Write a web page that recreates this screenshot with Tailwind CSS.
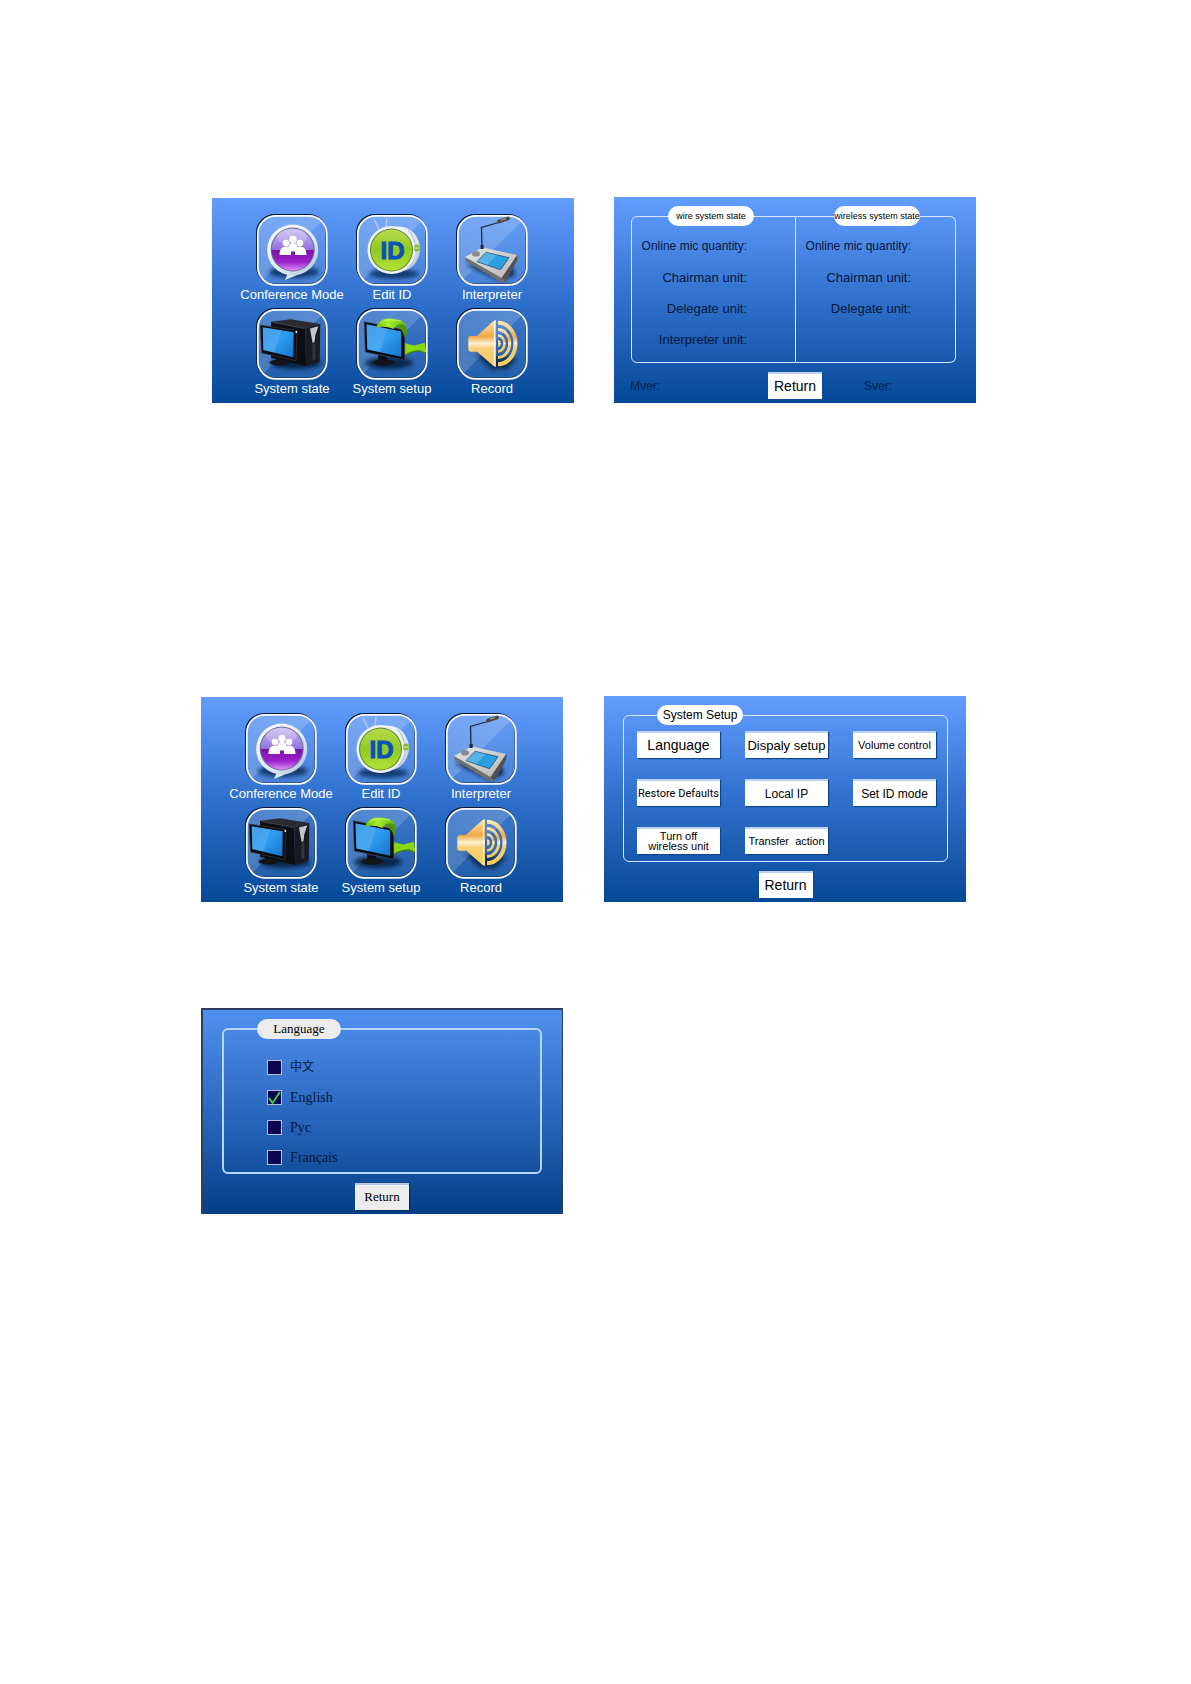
<!DOCTYPE html>
<html lang="en">
<head>
  <meta charset="UTF-8" />
  <meta name="viewport" content="width=device-width, initial-scale=1" />
  <title>Conference system screens</title>
  <script src="https://cdn.jsdelivr.net/npm/@tailwindcss/browser@4"></script>
</head>
<body class="bg-white min-h-screen pt-[197px] pb-16 font-['Liberation_Sans',sans-serif]">

  <!-- Icon set, reused by both menus -->
  <svg class="absolute w-0 h-0" aria-hidden="true">
    <defs>
      <filter id="soft" x="-30%" y="-60%" width="160%" height="220%"><feGaussianBlur stdDeviation="2" /></filter>
      <linearGradient id="gloss" x1="0" y1="0" x2="1" y2="1">
        <stop offset="0" stop-color="#fff" stop-opacity=".1" />
        <stop offset="1" stop-color="#fff" stop-opacity=".22" />
      </linearGradient>
      <linearGradient id="ring" x1="0" y1="0" x2="1" y2="1">
        <stop offset="0" stop-color="#ffffff" />
        <stop offset=".6" stop-color="#dfe8f4" />
        <stop offset="1" stop-color="#a9bdd8" />
      </linearGradient>
      <linearGradient id="purple" x1="0" y1="0" x2="0" y2="1">
        <stop offset="0" stop-color="#c9bdf5" />
        <stop offset=".5" stop-color="#9272dd" />
        <stop offset=".52" stop-color="#7a10a8" />
        <stop offset=".8" stop-color="#9f22cc" />
        <stop offset="1" stop-color="#dc8cf5" />
      </linearGradient>
      <linearGradient id="green" x1="0" y1="0" x2="0" y2="1">
        <stop offset="0" stop-color="#b9dc4c" />
        <stop offset=".5" stop-color="#8fc922" />
        <stop offset="1" stop-color="#b4e238" />
      </linearGradient>
      <linearGradient id="ribbon" x1="0" y1="0" x2="1" y2="0">
        <stop offset="0" stop-color="#5fbf08" />
        <stop offset=".4" stop-color="#a5ee2c" />
        <stop offset="1" stop-color="#66bb08" />
      </linearGradient>
      <linearGradient id="screen" x1="0" y1="0" x2="1" y2="1">
        <stop offset="0" stop-color="#2a8fe6" />
        <stop offset=".5" stop-color="#2d9cf0" />
        <stop offset="1" stop-color="#1474cc" />
      </linearGradient>
      <linearGradient id="metal" x1="0" y1="0" x2="1" y2="1">
        <stop offset="0" stop-color="#e6e6e6" />
        <stop offset="1" stop-color="#b9b7b4" />
      </linearGradient>
      <linearGradient id="gold" x1="0" y1="0" x2="0" y2="1">
        <stop offset="0" stop-color="#ffe9b0" />
        <stop offset=".35" stop-color="#f0a848" />
        <stop offset=".5" stop-color="#fff0cf" />
        <stop offset=".6" stop-color="#f7cf78" />
        <stop offset="1" stop-color="#f6cc58" />
      </linearGradient>
      <clipPath id="rightHalf"><rect x="42" y="8" width="24" height="56" /></clipPath>
    </defs>

    <symbol id="tile" viewBox="0 0 72 72">
      <rect x="0.8" y="0.8" width="69.5" height="69.5" rx="18" fill="none" stroke="#041a3c" stroke-width="1.6" />
      <rect x="1.8" y="1.8" width="69" height="69" rx="18" fill="#fff" fill-opacity=".08" />
      <path d="M1.8 20a18 18 0 0 1 18-18.200h33a18 18 0 0 1 13 5.500L7 66a18 18 0 0 1-5.200-12z" fill="url(#gloss)" />
      <rect x="1.8" y="1.8" width="69" height="69" rx="18" fill="none" stroke="#fff" stroke-width="1.7" />
    </symbol>

    <symbol id="conference" viewBox="0 0 72 72">
      <ellipse cx="38" cy="58" rx="25" ry="6" fill="#06204c" opacity=".75" filter="url(#soft)" />
      <path d="M32 59l-3 7 17-7z" fill="#dbe6f5" />
      <circle cx="36.700" cy="36" r="25.500" fill="url(#ring)" />
      <circle cx="36.700" cy="35.500" r="22" fill="#6a6d96" />
      <circle cx="36.700" cy="35.500" r="21" fill="url(#purple)" />
      <ellipse cx="36" cy="23" rx="15" ry="8" fill="#fff" opacity=".2" />
      <g fill="#fff">
        <circle cx="37" cy="25.400" r="3.600" />
        <circle cx="30" cy="29" r="3.300" />
        <circle cx="44" cy="29" r="3.300" />
        <path d="M23.500 41c0-5 2-8.500 6.500-8.500 1 0 1.800.2 2.500.5.6-2.600 2-4 4.500-4s3.900 1.400 4.500 4c.7-.3 1.500-.5 2.500-.5 4.500 0 6.500 3.500 6.500 8.500H39v-3.500h-4V41z" />
      </g>
    </symbol>

    <symbol id="edit-id" viewBox="0 0 72 72">
      <ellipse cx="38" cy="60" rx="25" ry="5" fill="#06204c" opacity=".75" filter="url(#soft)" />
      <path d="M18 5l5 10M31 4l-1 9" stroke="#b6cdf0" stroke-width="1.400" fill="none" />
      <ellipse cx="43" cy="35" rx="21" ry="22.500" fill="url(#ring)" />
      <path d="M52 16c9 8 10 26 1 37" stroke="#a3b6d0" stroke-width="1" fill="none" />
      <circle cx="35.500" cy="36" r="24" fill="#eef3f8" />
      <circle cx="35.500" cy="36" r="21.500" fill="#5f8a2a" />
      <circle cx="35.500" cy="36" r="20.500" fill="url(#green)" />
      <ellipse cx="61" cy="34" rx="3" ry="3.600" fill="#7fbd2c" />
      <path d="M58.500 34h5" stroke="#e9f5d0" stroke-width="1" />
    </symbol>

    <symbol id="interpreter" viewBox="0 0 72 72">
      <path d="M9 50l36 17 14-6-4-12z" fill="#04142e" opacity=".85" filter="url(#soft)" />
      <path d="M9 43l1 4.500L44.500 68l5-.5L61 47v-6z" fill="#6f7074" />
      <path d="M9 43l17.700-9.500L61.300 41 45.700 64z" fill="url(#metal)" />
      <path d="M45.700 64L61.300 41v5L49.500 67.500z" fill="#4f4f54" />
      <path d="M30 38.300l23 5.400-8.500 12-23.500-8z" fill="#2aa0e0" stroke="#174c70" stroke-width=".8" />
      <path d="M30 38.300l11 2.600-10 10.200-10-3.400z" fill="#fff" opacity=".2" />
      <ellipse cx="20" cy="39.800" rx="4" ry="2.800" fill="#8b8b8f" />
      <path d="M26 34l-.5-20.500L46 7.500" fill="none" stroke="#1c2740" stroke-width="1.300" />
      <path d="M24.500 31h3.200v4h-3.200z" fill="#2a2a30" />
      <path d="M43 7.500l9-3" stroke="#4e4740" stroke-width="3.800" stroke-linecap="round" />
      <path d="M45 6.300l5-1.600" stroke="#c1b49a" stroke-width="1" />
    </symbol>

    <symbol id="state" viewBox="0 0 72 72">
      <ellipse cx="40" cy="55" rx="25" ry="6" fill="#04142e" opacity=".8" filter="url(#soft)" />
      <path d="M15 13.700l20-2.500 29.300 4.800L49.300 20z" fill="#2a2b30" />
      <path d="M15 13.700L49.300 20 50 58 15 50z" fill="#0d0e12" />
      <path d="M49.300 20l15-4-.6 37.700L50 58z" fill="#1a1b20" />
      <path d="M54 20.500l8.300-2.200-3 9-.8 7-2 .5z" fill="#c3c6cc" />
      <path d="M56.500 36l3-.8v16l-3 .9z" fill="#33353c" />
      <path d="M17 14.500l31.500 6" stroke="#5a5d66" stroke-width=".6" />
      <path d="M20 46l7 2 1 6h-8z" fill="#0a0b0f" />
      <ellipse cx="23.500" cy="54.500" rx="10" ry="3" fill="#12141a" />
      <path d="M4.300 17L41 22.700 40 52.700 5.500 45z" fill="#0a0b10" stroke="#3c4350" stroke-width=".6" />
      <path d="M6.700 19.300l31 5-.4 25-30-7.300z" fill="url(#screen)" />
      <path d="M6.700 19.300l19 3L18 44.500 7.300 42z" fill="#fff" opacity=".13" />
      <circle cx="40.300" cy="24" r=".9" fill="#fff" />
    </symbol>

    <symbol id="setup" viewBox="0 0 72 72">
      <ellipse cx="33" cy="55" rx="24" ry="6" fill="#04142e" opacity=".8" filter="url(#soft)" />
      <path d="M48 35L58 37.500 69 34.700 70.300 45 64 42.500C58 42.500 53 44 49 47z" fill="#86d90c" />
      <path d="M49 47.500C53 44.500 58 43 64 43L70.300 45.500" stroke="#3f8200" stroke-width="1.200" fill="none" />
      <path d="M22 47l9 2 1 6h-9z" fill="#0a0b0f" />
      <ellipse cx="27.500" cy="54.500" rx="11" ry="3.200" fill="#12141a" />
      <path d="M8.300 13.700L48.700 22v30L9.300 44z" fill="#0a0b10" stroke="#3c4350" stroke-width=".6" />
      <path d="M10.500 16.300l34.700 7.200v25.200L11.300 41.500z" fill="url(#screen)" />
      <path d="M10.500 16.300l21 4.300L24 44.200l-12.700-2.700z" fill="#fff" opacity=".13" />
      <path d="M37 12C46 12.500 51 17 51 23 51 26 50 28 48.700 29 47 23 44 20 39 18z" fill="#4b9705" />
      <path d="M20 19.500C22 14 26 10.500 31 10.500 40 10.500 48 11.500 50 17.500 46 15.500 40 15.500 37.500 21 32 18.500 25 18 20 19.500z" fill="url(#ribbon)" />
      <path d="M24 15.500C28 11.500 36 11.300 45 13" fill="none" stroke="#d3fa7c" stroke-width=".8" />
    </symbol>

    <symbol id="record" viewBox="0 0 72 72">
      <path d="M10 45l10 2 16 15 6-1 8 1 12-12-8 0-36-4z" fill="#04142e" opacity=".7" filter="url(#soft)" />
      <path d="M12.300 29.500l1.500-1.500h7L37.500 13l2.500-1v47l-2.500-1-16.200-14.300h-7.500L12.300 42z" fill="url(#gold)" />
      <path d="M38.500 13v45" stroke="#fff6dc" stroke-width="1.200" />
      <g clip-path="url(#rightHalf)" fill="none" stroke="url(#gold)">
        <ellipse cx="42" cy="35.500" rx="17.500" ry="20.700" stroke-width="4" />
        <ellipse cx="42" cy="35.500" rx="11.700" ry="14" stroke-width="3" />
        <ellipse cx="42" cy="35.500" rx="6.500" ry="8" stroke-width="2.600" />
        <ellipse cx="42" cy="35.500" rx="1.500" ry="2" stroke-width="2.600" />
      </g>
    </symbol>
  </svg>

  <main>
    <!-- Menu and system state -->
    <section class="grid grid-cols-2 items-end gap-10 pl-[212px] pr-[215px]">
      <nav class="grid grid-cols-3 gap-y-1 bg-linear-to-b from-[#629dff] via-[#2f70cc] to-[#034998] pl-[30px] pr-8 pt-4 pb-[5px] text-[13px] leading-[18px] text-white">
        <button type="button" class="flex flex-col items-center whitespace-nowrap">
          <svg class="size-[72px]" viewBox="0 0 72 72"><use href="#tile" /><use href="#conference" /></svg>
          Conference Mode
        </button>
        <button type="button" class="flex flex-col items-center whitespace-nowrap">
          <svg class="size-[72px]" viewBox="0 0 72 72">
            <use href="#tile" /><use href="#edit-id" />
            <text x="36.500" y="44.500" text-anchor="middle" font-size="24" font-weight="700" fill="#0a50b8" stroke="#0a50b8" stroke-width="1">ID</text>
          </svg>
          Edit ID
        </button>
        <button type="button" class="flex flex-col items-center whitespace-nowrap">
          <svg class="size-[72px]" viewBox="0 0 72 72"><use href="#tile" /><use href="#interpreter" /></svg>
          Interpreter
        </button>
        <button type="button" class="flex flex-col items-center whitespace-nowrap">
          <svg class="size-[72px]" viewBox="0 0 72 72"><use href="#tile" /><use href="#state" /></svg>
          System state
        </button>
        <button type="button" class="flex flex-col items-center whitespace-nowrap">
          <svg class="size-[72px]" viewBox="0 0 72 72"><use href="#tile" /><use href="#setup" /></svg>
          System setup
        </button>
        <button type="button" class="flex flex-col items-center whitespace-nowrap">
          <svg class="size-[72px]" viewBox="0 0 72 72"><use href="#tile" /><use href="#record" /></svg>
          Record
        </button>
      </nav>

      <div class="bg-linear-to-b from-[#629dff] via-[#2f70cc] to-[#034998] pt-[9px] pb-1 text-[#04163c]">
        <div class="grid grid-cols-[33fr_32fr] pl-[17px] pr-5">
          <fieldset class="min-w-0 rounded-l-md border border-[#d5e8ff] pt-[5px] pb-[7px]">
            <legend class="ml-9 w-[86px] rounded-full bg-white text-[9px] leading-5 whitespace-nowrap text-black"><span class="block text-center">wire system state</span></legend>
            <ul class="pr-12 text-right text-[13px] leading-[31px] whitespace-nowrap">
              <li class="text-xs leading-[31px]">Online mic quantity:</li>
              <li>Chairman unit:</li>
              <li>Delegate unit:</li>
              <li>Interpreter unit:</li>
            </ul>
          </fieldset>
          <fieldset class="min-w-0 rounded-r-md border border-l-0 border-[#d5e8ff] pt-[5px] pb-[7px]">
            <legend class="ml-[38px] w-[86px] rounded-full bg-white text-[9px] leading-5 whitespace-nowrap text-black"><span class="block text-center">wireless system state</span></legend>
            <ul class="pr-11 text-right text-[13px] leading-[31px] whitespace-nowrap">
              <li class="text-xs leading-[31px]">Online mic quantity:</li>
              <li>Chairman unit:</li>
              <li>Delegate unit:</li>
            </ul>
          </fieldset>
        </div>
        <div class="mt-[9px] grid grid-cols-[1fr_54px_1fr] items-center px-4 text-xs text-[#032250]">
          <span>Mver:</span>
          <button type="button" class="h-[27px] border-t-2 border-[#bcd2f7] bg-white pb-0.5 text-sm leading-none text-black shadow-[1px_1px_1px_#0b4593]">Return</button>
          <span class="pl-[42px]">Sver:</span>
        </div>
      </div>
    </section>

    <!-- Menu and system setup -->
    <section class="mt-[293px] grid grid-cols-2 items-end gap-[41px] pl-[201px] pr-[225px]">
      <nav class="grid grid-cols-3 gap-y-1 bg-linear-to-b from-[#629dff] via-[#2f70cc] to-[#034998] pl-[30px] pr-8 pt-4 pb-[5px] text-[13px] leading-[18px] text-white">
        <button type="button" class="flex flex-col items-center whitespace-nowrap">
          <svg class="size-[72px]" viewBox="0 0 72 72"><use href="#tile" /><use href="#conference" /></svg>
          Conference Mode
        </button>
        <button type="button" class="flex flex-col items-center whitespace-nowrap">
          <svg class="size-[72px]" viewBox="0 0 72 72">
            <use href="#tile" /><use href="#edit-id" />
            <text x="36.500" y="44.500" text-anchor="middle" font-size="24" font-weight="700" fill="#0a50b8" stroke="#0a50b8" stroke-width="1">ID</text>
          </svg>
          Edit ID
        </button>
        <button type="button" class="flex flex-col items-center whitespace-nowrap">
          <svg class="size-[72px]" viewBox="0 0 72 72"><use href="#tile" /><use href="#interpreter" /></svg>
          Interpreter
        </button>
        <button type="button" class="flex flex-col items-center whitespace-nowrap">
          <svg class="size-[72px]" viewBox="0 0 72 72"><use href="#tile" /><use href="#state" /></svg>
          System state
        </button>
        <button type="button" class="flex flex-col items-center whitespace-nowrap">
          <svg class="size-[72px]" viewBox="0 0 72 72"><use href="#tile" /><use href="#setup" /></svg>
          System setup
        </button>
        <button type="button" class="flex flex-col items-center whitespace-nowrap">
          <svg class="size-[72px]" viewBox="0 0 72 72"><use href="#tile" /><use href="#record" /></svg>
          Record
        </button>
      </nav>

      <div class="flex flex-col bg-linear-to-b from-[#629dff] via-[#2f70cc] to-[#034998] pt-[9px] pb-1 pl-[19px] pr-[18px] text-black">
        <fieldset class="rounded-md border border-[#d5e8ff] pt-[6px] pb-[7px] pl-[13px] pr-[11px]">
          <legend class="ml-5 w-[86px] rounded-full bg-white text-xs leading-5 whitespace-nowrap"><span class="block text-center">System Setup</span></legend>
          <div class="grid grid-cols-3 gap-x-[25px] gap-y-[21px] whitespace-nowrap leading-none">
            <button type="button" class="h-[27px] border-t-2 border-[#bcd2f7] bg-white pb-0.5 text-sm leading-none shadow-[1px_1px_1px_#0b4593]">Language</button>
            <button type="button" class="h-[27px] border-t-2 border-[#bcd2f7] bg-white text-[13px] leading-none shadow-[1px_1px_1px_#0b4593]">Dispaly setup</button>
            <button type="button" class="h-[27px] border-t-2 border-[#bcd2f7] bg-white text-[11px] leading-none shadow-[1px_1px_1px_#0b4593]">Volume control</button>
            <button type="button" class="h-[27px] border-t-2 border-[#bcd2f7] bg-white text-[11px] leading-none font-[Roboto,sans-serif] shadow-[1px_1px_1px_#0b4593]">Restore Defaults</button>
            <button type="button" class="h-[27px] border-t-2 border-[#bcd2f7] bg-white text-xs leading-none shadow-[1px_1px_1px_#0b4593]">Local IP</button>
            <button type="button" class="h-[27px] border-t-2 border-[#bcd2f7] bg-white text-xs leading-none shadow-[1px_1px_1px_#0b4593]">Set ID mode</button>
            <button type="button" class="h-[27px] border-t-2 border-[#bcd2f7] bg-white pb-0.5 text-[11px] leading-[10px] shadow-[1px_1px_1px_#0b4593]">Turn off<br />wireless unit</button>
            <button type="button" class="h-[27px] border-t-2 border-[#bcd2f7] bg-white text-[11px] leading-none shadow-[1px_1px_1px_#0b4593]">Transfer&nbsp; action</button>
          </div>
        </fieldset>
        <button type="button" class="mt-[9px] h-[27px] w-[54px] self-center border-t-2 border-[#bcd2f7] bg-white pb-0.5 text-sm leading-none shadow-[1px_1px_1px_#0b4593]">Return</button>
      </div>
    </section>

    <!-- Language -->
    <section class="mt-[106px] grid grid-cols-2 gap-[41px] pl-[201px] pr-[225px] font-['Liberation_Serif','Noto_Sans_CJK_SC',serif]">
      <div class="flex flex-col border-t-2 border-l-2 border-r border-[#2c3f5e] bg-linear-to-b from-[#5090ee] via-[#2a68c0] to-[#033f86] pt-[9px] pb-1 pl-[19px] pr-5">
        <fieldset class="rounded-md border-2 border-[#b4d6f8] pt-[21px] pb-[7px] pl-[43px]">
          <legend class="ml-[-10px] w-[84px] rounded-full bg-[#ececec] text-[13px] leading-5 text-black"><span class="block text-center">Language</span></legend>
          <div class="flex flex-col gap-[15px] text-sm leading-[15px] text-[#04163c]">
            <label class="relative flex items-center gap-2 text-xs leading-[15px]">
              <input type="checkbox" name="lang" class="peer size-[15px] appearance-none border border-[#b4bfe0] bg-[#0a0650]" />
              <svg class="absolute left-0 hidden size-[15px] peer-checked:block" viewBox="0 0 15 15" fill="none" stroke="#2fe03a" stroke-width="1.800"><path d="M2 8l3.500 5L13 2" /></svg>
              中文
            </label>
            <label class="relative flex items-center gap-2">
              <input type="checkbox" name="lang" checked class="peer size-[15px] appearance-none border border-[#b4bfe0] bg-[#0a0650]" />
              <svg class="absolute left-0 hidden size-[15px] peer-checked:block" viewBox="0 0 15 15" fill="none" stroke="#2fe03a" stroke-width="1.800"><path d="M2 8l3.500 5L13 2" /></svg>
              English
            </label>
            <label class="relative flex items-center gap-2">
              <input type="checkbox" name="lang" class="peer size-[15px] appearance-none border border-[#b4bfe0] bg-[#0a0650]" />
              <svg class="absolute left-0 hidden size-[15px] peer-checked:block" viewBox="0 0 15 15" fill="none" stroke="#2fe03a" stroke-width="1.800"><path d="M2 8l3.500 5L13 2" /></svg>
              Рус
            </label>
            <label class="relative flex items-center gap-2">
              <input type="checkbox" name="lang" class="peer size-[15px] appearance-none border border-[#b4bfe0] bg-[#0a0650]" />
              <svg class="absolute left-0 hidden size-[15px] peer-checked:block" viewBox="0 0 15 15" fill="none" stroke="#2fe03a" stroke-width="1.800"><path d="M2 8l3.500 5L13 2" /></svg>
              Français
            </label>
          </div>
        </fieldset>
        <button type="button" class="mt-[9px] h-[27px] w-[54px] self-center border-t-2 border-[#b4c4e4] bg-[#ececec] pb-0.5 text-[13px] leading-none text-black shadow-[1px_1px_1px_#052c66]">Return</button>
      </div>
    </section>
  </main>
</body>
</html>
